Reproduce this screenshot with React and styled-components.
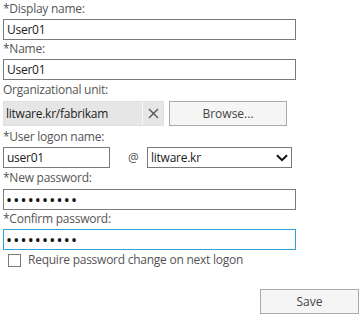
import React from "react";
import styled, { createGlobalStyle } from "styled-components";

const Global = createGlobalStyle`
  html, body { margin: 0; padding: 0; background: #fff; }
  body { font-family: "Open Sans", "Noto Sans", "Liberation Sans", sans-serif; }
  * { box-sizing: border-box; }
`;

const Form = styled.div`
  width: 363px;
  height: 322px;
  padding: 0 0 0 3px;
  display: flex;
  flex-direction: column;
  color: #444;
  font-size: 12px;
`;

const Label = styled.div`
  height: ${(p) => p.$h || 19}px;
  line-height: 16px;
  padding-top: ${(p) => p.$pt ?? 1}px;
  color: #555;
  font-size: 12px;
  letter-spacing: -0.25px;
`;

const TextBox = styled.input`
  display: block;
  width: ${(p) => p.$w || 293}px;
  height: 21px;
  margin: 0;
  padding: 0 3px;
  border: 1px solid ${(p) => (p.$focus ? "#2ea3db" : "#7a7a7a")};
  background: #fff;
  color: #1a1a1a;
  font-family: inherit;
  font-size: 12px;
  letter-spacing: -0.25px;
  outline: none;
`;

const PasswordBox = styled(TextBox)`
  font-size: 16px;
  letter-spacing: 1.2px;
  padding-left: 2px;
  color: #111;
`;

const Row = styled.div`
  display: flex;
  align-items: center;
  gap: ${(p) => p.$gap || 0}px;
`;

const OuBox = styled.div`
  width: 161px;
  height: 25px;
  display: flex;
  align-items: stretch;
  background: #e6e6e6;
  border: 1px solid #e0e0e0;
`;

const OuText = styled.div`
  flex: 1;
  display: flex;
  align-items: center;
  padding-left: 2px;
  color: #222;
  letter-spacing: -0.25px;
  border-right: 1px solid #f6f6f6;
`;

const ClearBtn = styled.div`
  width: 20px;
  display: flex;
  align-items: center;
  justify-content: center;
`;

const Button = styled.div`
  width: ${(p) => p.$w}px;
  height: 25px;
  display: flex;
  align-items: center;
  justify-content: center;
  background: #f5f5f5;
  border: 1px solid #a3adad;
  color: #444;
  font-size: 12px;
`;

const At = styled.div`
  width: 37px;
  padding-left: 18px;
  color: #555;
  font-size: 12px;
`;

const Select = styled.div`
  width: 145px;
  height: 21px;
  display: flex;
  align-items: center;
  justify-content: space-between;
  padding: 0 3px 0 3px;
  border: 1px solid #7a7a7a;
  color: #1a1a1a;
  letter-spacing: -0.25px;
`;

const Check = styled.div`
  display: flex;
  align-items: center;
  gap: 7px;
  padding-left: 5px;
  margin-top: 2px;
  line-height: 16px;
  color: #555;
  letter-spacing: -0.25px;
`;

const Box = styled.span`
  width: 13px;
  height: 13px;
  border: 1px solid #7a7a7a;
  background: #fff;
`;

const Footer = styled.div`
  display: flex;
  justify-content: flex-end;
  padding-right: 4px;
  margin-top: 21px;
`;

const Gap = styled.div`
  height: ${(p) => p.$h}px;
`;

export default function App() {
  return (
    <Form>
      <Global />
      <Label>*Display name:</Label>
      <TextBox defaultValue="User01" readOnly />
      <Label>*Name:</Label>
      <TextBox defaultValue="User01" readOnly />
      <Label $h={21} $pt={2}>Organizational unit:</Label>
      <Row $gap={5}>
        <OuBox>
          <OuText>litware.kr/fabrikam</OuText>
          <ClearBtn>
            <svg width="11" height="11" viewBox="0 0 11 11">
              <path d="M1 1 L10 10 M10 1 L1 10" stroke="#555" strokeWidth="1.4" fill="none" />
            </svg>
          </ClearBtn>
        </OuBox>
        <Button $w={118}>Browse...</Button>
      </Row>
      <Gap $h={2} />
      <Label>*User logon name:</Label>
      <Row>
        <TextBox $w={107} defaultValue="user01" readOnly />
        <At>@</At>
        <Select>
          <span>litware.kr</span>
          <svg width="12" height="8" viewBox="0 0 12 8">
            <path d="M1 1.2 L6 6.2 L11 1.2" stroke="#111" strokeWidth="2" fill="none" />
          </svg>
        </Select>
      </Row>
      <Label $h={21} $pt={2}>*New password:</Label>
      <PasswordBox type="password" defaultValue="Password01" readOnly />
      <Label>*Confirm password:</Label>
      <PasswordBox $focus type="password" defaultValue="Password01" readOnly />
      <Check>
        <Box />
        <span>Require password change on next logon</span>
      </Check>
      <Footer>
        <Button $w={99}>Save</Button>
      </Footer>
    </Form>
  );
}
